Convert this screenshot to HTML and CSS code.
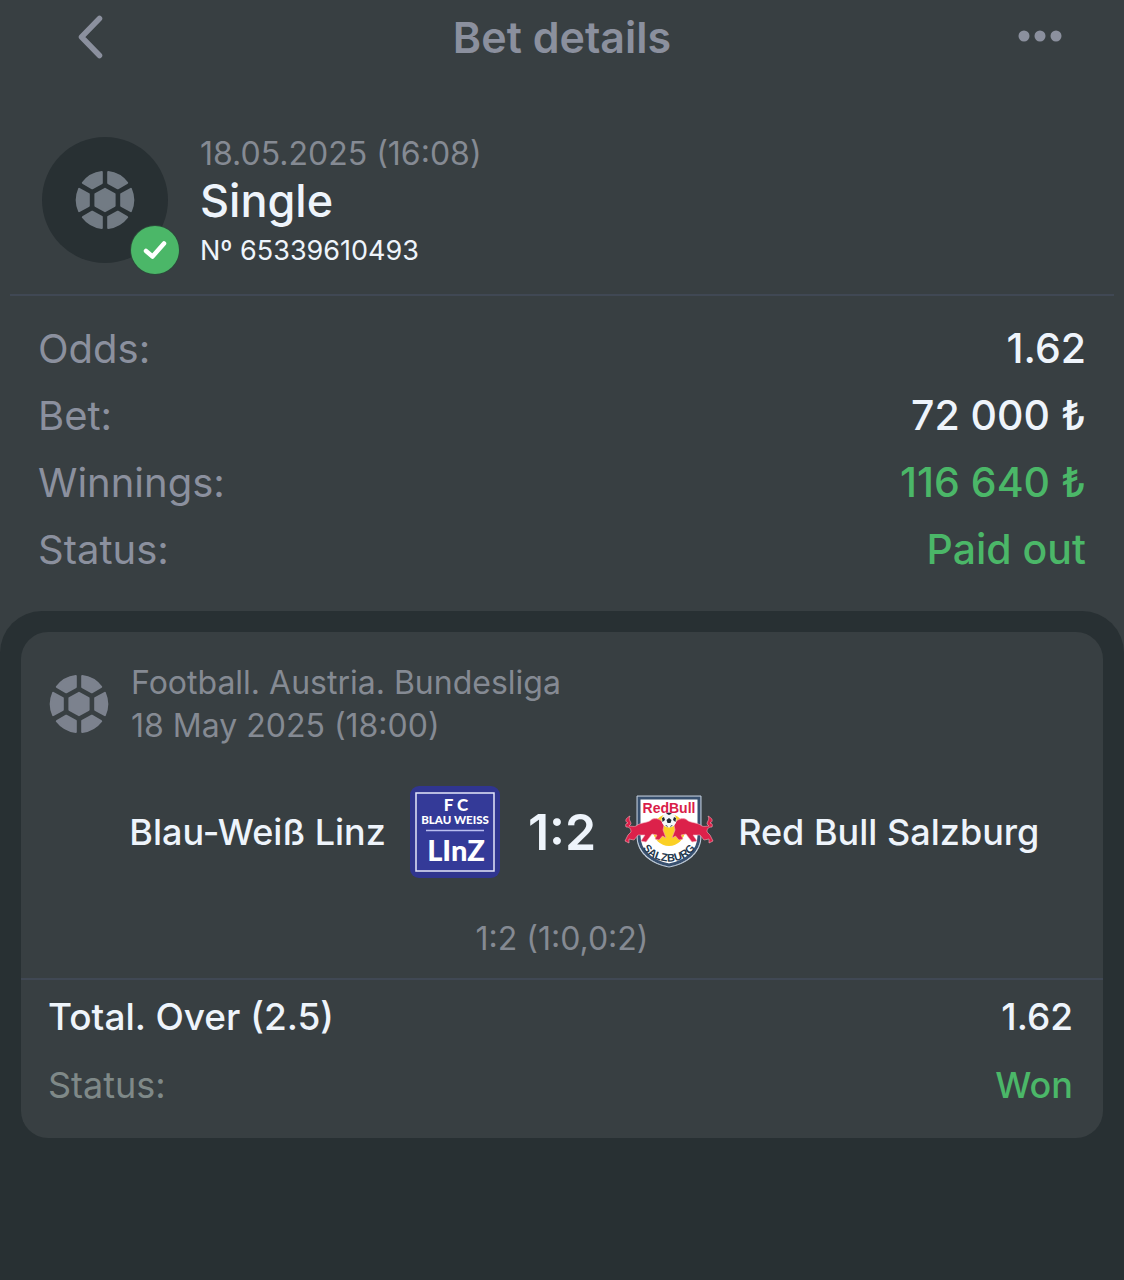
FILE: index.html
```html
<!DOCTYPE html>
<html lang="en">
<head>
    <meta charset="UTF-8">
    <meta name="viewport" content="width=device-width, initial-scale=1">
    <title>Bet details</title>
    <link rel="stylesheet" href="styles.css">
</head>
<body>
<svg class="sprite" aria-hidden="true">
    <symbol id="ball" viewBox="-30 -30 60 60">
        <g stroke="currentColor" stroke-width="2" stroke-linejoin="round" fill="currentColor">
            <path d="M0 -11.2L9.6 -5.8V5.8L0 11.2L-9.6 5.8V-5.8Z"/>
            <path d="M-3.2 -28A28.2 28.2 0 0 0 -22.2 -17.2L-12.8 -11.7L-3.2 -17Z"/>
            <path d="M3.2 -28A28.2 28.2 0 0 1 22.2 -17.2L12.8 -11.7L3.2 -17Z"/>
            <path d="M-3.2 28A28.2 28.2 0 0 1 -22.2 17.2L-12.8 11.7L-3.2 17Z"/>
            <path d="M3.2 28A28.2 28.2 0 0 0 22.2 17.2L12.8 11.7L3.2 17Z"/>
            <path d="M-25.9 -11.2A28.2 28.2 0 0 0 -25.9 11.2L-16.2 5.8V-5.8Z"/>
            <path d="M25.9 -11.2A28.2 28.2 0 0 1 25.9 11.2L16.2 5.8V-5.8Z"/>
        </g>
    </symbol>
</svg>

<header class="topbar">
    <button class="icon-btn back" type="button" aria-label="Back">
        <svg width="28" height="44" viewBox="0 0 28 44"><path d="M23.500 3.500L5.500 22L23.500 40.500" fill="none" stroke="currentColor" stroke-width="5.500" stroke-linecap="round" stroke-linejoin="round"/></svg>
    </button>
    <h1>Bet details</h1>
    <button class="icon-btn more" type="button" aria-label="More">
        <svg width="44" height="14" viewBox="0 0 44 14" fill="currentColor"><circle cx="6" cy="6" r="5.500"/><circle cx="22" cy="6" r="5.500"/><circle cx="38" cy="6" r="5.500"/></svg>
    </button>
</header>

<main>
    <section class="bet">
        <div class="avatar">
            <svg class="ball"><use href="#ball"/></svg>
            <span class="badge">
                <svg width="48" height="48" viewBox="0 0 48 48"><path d="M15 25L21.500 30.500L33 17.500" fill="none" stroke="#fff" stroke-width="4.500" stroke-linecap="round" stroke-linejoin="round"/></svg>
            </span>
        </div>
        <div class="bet-text">
            <div class="bet-date">18.05.2025 (16:08)</div>
            <h2>Single</h2>
            <div class="bet-number">Nº 65339610493</div>
        </div>
    </section>

    <dl class="summary">
        <div class="row"><dt>Odds:</dt><dd>1.62</dd></div>
        <div class="row"><dt>Bet:</dt><dd>72 000 ₺</dd></div>
        <div class="row"><dt>Winnings:</dt><dd class="green">116 640 ₺</dd></div>
        <div class="row"><dt>Status:</dt><dd class="green">Paid out</dd></div>
    </dl>

    <section class="events">
        <article class="card">
            <div class="league">
                <svg class="ball"><use href="#ball"/></svg>
                <div>
                    <div>Football. Austria. Bundesliga</div>
                    <div>18 May 2025 (18:00)</div>
                </div>
            </div>

            <div class="match">
                <div class="team home">
                    <span>Blau-Weiß Linz</span>
                    <svg class="crest" width="90" height="92" viewBox="0 0 90 92" role="img" aria-label="FC Blau-Weiß Linz crest">
                        <rect width="90" height="92" rx="9" fill="#30358f"/>
                        <rect x="6" y="7" width="78" height="78" fill="#343a98" stroke="#e4e6fa" stroke-width="1.500"/>
                        <g fill="#fff" font-family="Lato, sans-serif" font-weight="900" text-anchor="middle">
                            <text x="46" y="25" font-size="17">F C</text>
                            <text x="45" y="38" font-size="11.500">BLAU WEISS</text>
                            <text x="46" y="75" font-size="29" font-family="Lato, sans-serif">LInZ</text>
                        </g>
                        <path d="M16 44.500H74" stroke="#b9bdf0" stroke-width="1.500"/>
                    </svg>
                </div>
                <div class="score">1:2</div>
                <div class="team away">
                    <svg class="crest" width="90" height="76" viewBox="0 0 90 76" role="img" aria-label="Red Bull Salzburg crest">
                        <path d="M13 2H77V42C77 60 62 70 45 73C28 70 13 60 13 42Z" fill="#fff" stroke="#bccbdc" stroke-width="1"/>
                        <path d="M15 4H75V42C75 58 61 68 45 71C29 68 15 58 15 42Z" fill="#fff" stroke="#38506f" stroke-width="3"/>
                        <circle cx="45" cy="36" r="16" fill="#fbd024"/>
                        <text x="45" y="19" font-family="Liberation Sans, sans-serif" font-size="14" font-weight="700" text-anchor="middle" fill="#d91d49">RedBull</text>
                        <g fill="#dc214a" stroke="#f3a9b9" stroke-width=".6">
                            <path id="bull" d="M42 44L38.500 42L35 46L31 45L33 41L28 40L22 48L17 47L21 41L14 41L10 46L5 45L5 49L1 47L4 41L7 38C7 34 5 33 2 33C1 31 2 29 4 29C0 27 2 24 6 22C4 26 7 27 7 30L5 32C8 32 10 33 12 32C17 28 24 29 27 26C31 23 38 25 40 31L39 36Z"/>
                            <use href="#bull" transform="matrix(-1 0 0 1 90 0)"/>
                        </g>
                        <circle cx="45" cy="26" r="7.500" fill="#f5f7f9"/>
                        <g fill="#202a36">
                            <path d="M42.500 26L45 24L47.500 26L46.500 29H43.500Z"/>
                            <path d="M42 19.500L45 21L48 19.500L45 18.500Z"/>
                            <path d="M38 24L40 23L41 26L38.500 28Z"/>
                            <path d="M52 24L50 23L49 26L51.500 28Z"/>
                            <path d="M41 31L43 31.500L44 33.500Z"/>
                            <path d="M49 31L47 31.500L46 33.500Z"/>
                        </g>
                        <path id="salzburg" d="M16 48C24 74 66 74 74 48" fill="none"/>
                        <text font-family="Liberation Sans, sans-serif" font-size="11" font-weight="700" fill="#24384d" text-anchor="middle"><textPath href="#salzburg" startOffset="50%">SALZBURG</textPath></text>
                    </svg>
                    <span>Red Bull Salzburg</span>
                </div>
            </div>
            <div class="periods">1:2 (1:0,0:2)</div>

            <dl class="outcome">
                <div class="row total"><dt>Total. Over (2.5)</dt><dd>1.62</dd></div>
                <div class="row status"><dt>Status:</dt><dd class="green">Won</dd></div>
            </dl>
        </article>
    </section>
</main>
</body>
</html>
```
FILE: styles.css
```css
* {
    box-sizing: border-box;
}

body {
    margin: 0;
    min-height: 100vh;
    display: flex;
    flex-direction: column;
    background-color: #383f42;
    color: #eef4fb;
    font-family: Inter, "Liberation Sans", sans-serif;
}

h1, h2, dl, dd {
    margin: 0;
}

.sprite {
    position: absolute;
    width: 0;
    height: 0;
}

.topbar {
    display: grid;
    grid-template-columns: 1fr auto 1fr;
    align-items: center;
    height: 74px;
    padding: 0 62px 0 76px;
    color: #8b909e;
}

.topbar h1 {
    font-size: 43px;
    font-weight: 600;
    line-height: 52px;
    margin-right: 14px;
}

.icon-btn {
    display: flex;
    padding: 0;
    border: 0;
    background: none;
    color: inherit;
    cursor: pointer;
}

.more {
    justify-self: end;
}

main {
    flex: 1;
    display: flex;
    flex-direction: column;
}

.bet {
    display: flex;
    gap: 32px;
    margin: 56px 10px 0;
    padding: 0 32px 18px;
    border-bottom: 2px solid #404854;
}

.avatar {
    position: relative;
    display: flex;
    align-items: center;
    justify-content: center;
    width: 126px;
    height: 126px;
    margin-top: 7px;
    border-radius: 50%;
    background-color: #283033;
    color: #727b84;
}

.ball {
    flex: none;
    width: 60px;
    height: 60px;
}

.badge {
    position: absolute;
    right: -11px;
    bottom: -11px;
    width: 48px;
    height: 48px;
    border-radius: 50%;
    background-color: #4bb768;
    box-shadow: 0 0 0 1px #2c4a3b;
}

.bet-date {
    font-size: 32px;
    line-height: 47px;
    color: #858a93;
}

.bet h2 {
    font-size: 45px;
    font-weight: 500;
    line-height: 48px;
}

.bet-number {
    font-size: 27px;
    line-height: 51px;
}

.summary {
    padding: 19px 38px 28px;
    font-size: 41px;
    line-height: 67px;
    font-weight: 500;
}

.row {
    display: flex;
    justify-content: space-between;
}

.summary dt {
    font-size: 40px;
    font-weight: 400;
    color: #8b909e;
}

.row .green {
    color: #4bb768;
}

.events {
    flex: 1;
    padding: 21px;
    border-radius: 42px 42px 0 0;
    background-color: #283033;
}

.card {
    padding-bottom: 19px;
    border-radius: 27px;
    background-color: #383f42;
}

.league {
    display: flex;
    align-items: center;
    gap: 22px;
    padding: 29px 28px 0;
    font-size: 32px;
    line-height: 43px;
    color: #858a93;
}

.league .ball {
    color: #7c828e;
}

.match {
    display: grid;
    grid-template-columns: 1fr auto 1fr;
    align-items: center;
    gap: 28px;
    padding: 39px 28px 0;
    font-size: 36px;
    font-weight: 500;
}

.team {
    display: flex;
    align-items: center;
    gap: 24px;
}

.home {
    justify-content: flex-end;
}

.crest {
    flex: none;
}

.score {
    font-size: 50px;
    font-weight: 600;
}

.periods {
    padding: 41px 0 19px;
    border-bottom: 2px solid #404854;
    font-size: 32px;
    line-height: 40px;
    text-align: center;
    color: #858a93;
}

.outcome {
    padding: 3px 30px 0 27px;
    font-size: 36px;
    line-height: 68px;
    font-weight: 500;
}

.total {
    font-size: 37px;
}

.status dt {
    font-weight: 400;
    color: #7f8988;
}
```
